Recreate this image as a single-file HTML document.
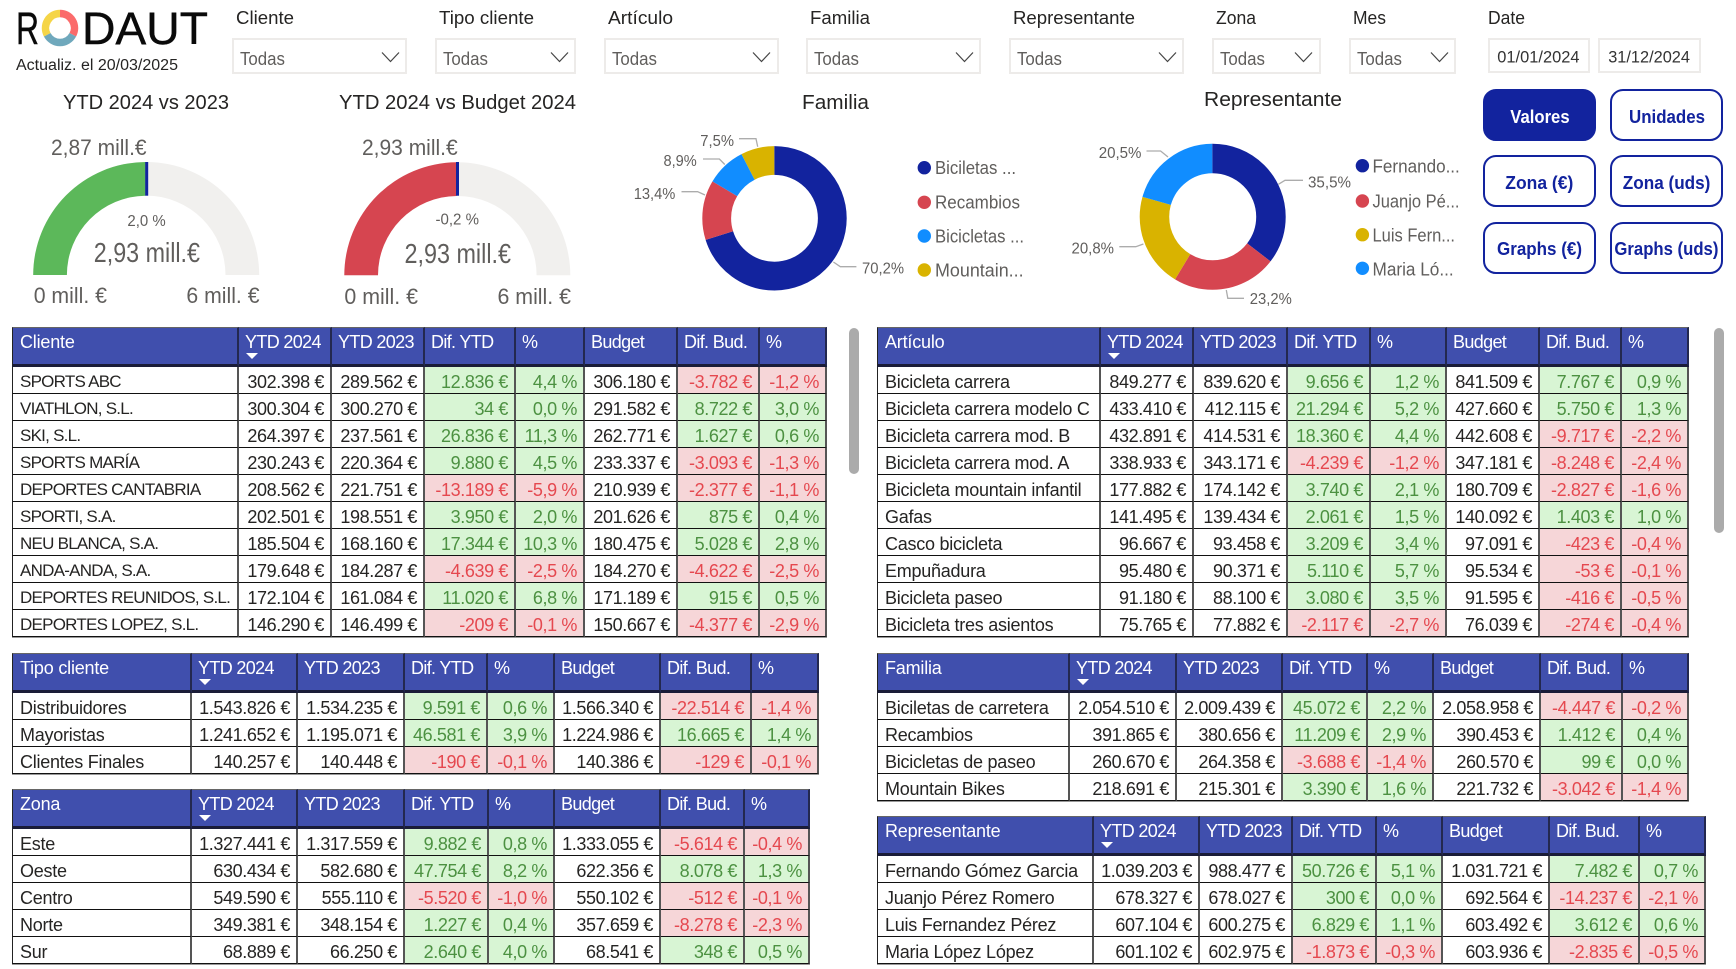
<!DOCTYPE html>
<html lang="es"><head><meta charset="utf-8"><title>RODAUT</title>
<style>
html,body{margin:0;padding:0;background:#fff}
#p{position:relative;width:1736px;height:969px;overflow:hidden;background:#fff;font-family:"Liberation Sans",sans-serif}
svg{position:absolute;left:0;top:0}
svg text{font-family:"Liberation Sans",sans-serif}
.d{position:absolute;box-sizing:border-box;border:2px solid #EDEBE9;background:#fff}
.b{position:absolute;box-sizing:border-box;border:2px solid #12239E;border-radius:13px;background:#fff}
.b.a{background:#12239E}
.s{position:absolute;background:#ABABAB;border-radius:5px;width:10px}
table{position:absolute;table-layout:fixed;border-collapse:separate;border-spacing:0;font-size:18px;color:#252423;border-bottom:1px solid #999}
th{height:40px;box-sizing:border-box;background:#404FAD;color:#fff;font-weight:400;text-align:left;vertical-align:top;padding:3px 0 0 6px;line-height:22px;letter-spacing:-.65px;border-top:1px solid #666;border-right:2px solid #23284F;border-bottom:3px solid #1A1C38;position:relative;white-space:nowrap;overflow:hidden}
th:first-child{padding-left:7px;border-left:1px solid #222;letter-spacing:-.2px}
th i{position:absolute;left:7px;top:25px;width:0;height:0;border-left:6.5px solid transparent;border-right:6.5px solid transparent;border-top:6.5px solid #fff}
td{height:27px;box-sizing:border-box;text-align:right;padding:4px 6px 0 0;line-height:22px;letter-spacing:-.38px;border-right:2px solid #555;border-bottom:1px solid #111;white-space:nowrap;overflow:hidden;background:#fff}
td:first-child{text-align:left;padding-left:7px;border-left:1px solid #222;letter-spacing:-.25px;color:#252423}
.caps td:first-child{font-size:17px;letter-spacing:-.75px}
td.g{background:#D8F5D4;color:#4C9141}
td.r{background:#F6D6D8;color:#E5484F}
</style></head><body><div id="p">

<svg width="1736" height="330" viewBox="0 0 1736 330">
<title>RODAUT</title>
<!-- logo -->
<text x="16" y="44" font-size="45" fill="#0a0a0a" stroke="#0a0a0a" stroke-width=".4" textLength="23" lengthAdjust="spacingAndGlyphs">R</text>
<path d="M60 13.5 A14.5 14.5 0 0 1 72.8 34.8" fill="none" stroke="#FB6B6B" stroke-width="7.5"/>
<path d="M72.8 34.8 A14.5 14.5 0 0 1 47.2 34.8" fill="none" stroke="#6FA8BC" stroke-width="7.5"/>
<path d="M47.2 34.8 A14.5 14.5 0 0 1 60 13.5" fill="none" stroke="#F5D547" stroke-width="7.5"/>
<text x="82" y="44" font-size="45" fill="#0a0a0a" stroke="#0a0a0a" stroke-width=".4" textLength="126" lengthAdjust="spacingAndGlyphs">DAUT</text>
<text x="16" y="70" font-size="15.5" fill="#252423" textLength="162" lengthAdjust="spacingAndGlyphs">Actualiz. el 20/03/2025</text>

<!-- slicer labels -->
<g font-size="18.5" fill="#252423">
<text x="236" y="24" textLength="58" lengthAdjust="spacingAndGlyphs">Cliente</text>
<text x="439" y="24" textLength="95" lengthAdjust="spacingAndGlyphs">Tipo cliente</text>
<text x="608" y="24" textLength="65" lengthAdjust="spacingAndGlyphs">Artículo</text>
<text x="810" y="24" textLength="60" lengthAdjust="spacingAndGlyphs">Familia</text>
<text x="1013" y="24" textLength="122" lengthAdjust="spacingAndGlyphs">Representante</text>
<text x="1216" y="24" textLength="40" lengthAdjust="spacingAndGlyphs">Zona</text>
<text x="1353" y="24" textLength="33" lengthAdjust="spacingAndGlyphs">Mes</text>
<text x="1488" y="24" textLength="37" lengthAdjust="spacingAndGlyphs">Date</text>
</g>

<!-- titles -->
<g font-size="20" fill="#252423">
<text x="63" y="109" textLength="166" lengthAdjust="spacingAndGlyphs">YTD 2024 vs 2023</text>
<text x="339" y="109" textLength="237" lengthAdjust="spacingAndGlyphs">YTD 2024 vs Budget 2024</text>
<text x="802" y="109" textLength="67" lengthAdjust="spacingAndGlyphs">Familia</text>
<text x="1204" y="106" textLength="138" lengthAdjust="spacingAndGlyphs">Representante</text>
</g>

<!-- gauge 1 -->
<path d="M33.2 275 A113 113 0 1 1 259.2 275 L225.5 275 A79.3 79.3 0 1 0 66.9 275 Z" fill="#F1F0EE"/>
<path d="M33.2 275 A113 113 0 0 1 145.4 162 L145.4 195.7 A79.3 79.3 0 0 0 66.9 275 Z" fill="#5CB85A"/>
<rect x="145.2" y="162" width="3" height="33.7" fill="#12239E"/>
<!-- gauge 2 -->
<path d="M344.3 275.3 A113 113 0 1 1 570.3 275.3 L536.6 275.3 A79.3 79.3 0 1 0 378 275.3 Z" fill="#F1F0EE"/>
<path d="M344.3 275.3 A113 113 0 0 1 456.5 162.3 L456.5 196 A79.3 79.3 0 0 0 378 275.3 Z" fill="#D64550"/>
<rect x="456" y="162" width="3" height="33.7" fill="#12239E"/>

<g fill="#605E5C">
<text x="51" y="155" font-size="22" textLength="95.6" lengthAdjust="spacingAndGlyphs">2,87 mill.€</text>
<text x="127.4" y="226" font-size="16" textLength="38.3" lengthAdjust="spacingAndGlyphs">2,0 %</text>
<text x="93.8" y="262" font-size="28" textLength="106.2" lengthAdjust="spacingAndGlyphs">2,93 mill.€</text>
<text x="33.7" y="303" font-size="22" textLength="73.3" lengthAdjust="spacingAndGlyphs">0 mill. €</text>
<text x="186.4" y="303" font-size="22" textLength="73.1" lengthAdjust="spacingAndGlyphs">6 mill. €</text>
<text x="362" y="155" font-size="22" textLength="95.7" lengthAdjust="spacingAndGlyphs">2,93 mill.€</text>
<text x="435.5" y="224.5" font-size="16" textLength="43.5" lengthAdjust="spacingAndGlyphs">-0,2 %</text>
<text x="404.5" y="263" font-size="28" textLength="106.5" lengthAdjust="spacingAndGlyphs">2,93 mill.€</text>
<text x="344.4" y="304" font-size="22" textLength="73.6" lengthAdjust="spacingAndGlyphs">0 mill. €</text>
<text x="497.5" y="304" font-size="22" textLength="73.5" lengthAdjust="spacingAndGlyphs">6 mill. €</text>
</g>

<!-- donut 1 -->
<g fill="none" stroke-width="28.8" transform="rotate(-90 774.5 218.3)">
<circle cx="774.5" cy="218.3" r="57.8" pathLength="100" stroke="#12239E" stroke-dasharray="70.2 29.8"/>
<circle cx="774.5" cy="218.3" r="57.8" pathLength="100" stroke="#D64550" stroke-dasharray="13.4 86.6" stroke-dashoffset="-70.2"/>
<circle cx="774.5" cy="218.3" r="57.8" pathLength="100" stroke="#118DFF" stroke-dasharray="8.9 91.1" stroke-dashoffset="-83.6"/>
<circle cx="774.5" cy="218.3" r="57.8" pathLength="100" stroke="#D9B300" stroke-dasharray="7.5 92.5" stroke-dashoffset="-92.5"/>
</g>
<!-- donut 2 -->
<g fill="none" stroke-width="29.5" transform="rotate(-90 1212.7 216.8)">
<circle cx="1212.7" cy="216.8" r="58.25" pathLength="100" stroke="#12239E" stroke-dasharray="35.5 64.5"/>
<circle cx="1212.7" cy="216.8" r="58.25" pathLength="100" stroke="#D64550" stroke-dasharray="23.2 76.8" stroke-dashoffset="-35.5"/>
<circle cx="1212.7" cy="216.8" r="58.25" pathLength="100" stroke="#D9B300" stroke-dasharray="20.8 79.2" stroke-dashoffset="-58.7"/>
<circle cx="1212.7" cy="216.8" r="58.25" pathLength="100" stroke="#118DFF" stroke-dasharray="20.5 79.5" stroke-dashoffset="-79.5"/>
</g>

<!-- leaders -->
<g fill="none" stroke="#ACACAC" stroke-width="1.3">
<path d="M739 138.7H756L757.7 146.7"/>
<path d="M703 159H719.4L724.8 164.5"/>
<path d="M681.5 191.7H697.6L705 195"/>
<path d="M856.4 266.7H840.3L833.4 262"/>
<path d="M1146.5 151H1160.6L1168 157"/>
<path d="M1119.3 246.7H1135.8L1143.4 244"/>
<path d="M1303 180.3H1285L1278.4 184.3"/>
<path d="M1244 298.3H1227.8L1226.3 290"/>
</g>
<g font-size="16" fill="#605E5C">
<text x="700.3" y="146" textLength="33.7" lengthAdjust="spacingAndGlyphs">7,5%</text>
<text x="663.5" y="166" textLength="33.3" lengthAdjust="spacingAndGlyphs">8,9%</text>
<text x="633.7" y="199" textLength="41.7" lengthAdjust="spacingAndGlyphs">13,4%</text>
<text x="862" y="273.3" textLength="42" lengthAdjust="spacingAndGlyphs">70,2%</text>
<text x="1098.7" y="158" textLength="42.8" lengthAdjust="spacingAndGlyphs">20,5%</text>
<text x="1071.5" y="253.3" textLength="42.5" lengthAdjust="spacingAndGlyphs">20,8%</text>
<text x="1308" y="187.3" textLength="43" lengthAdjust="spacingAndGlyphs">35,5%</text>
<text x="1249.7" y="304" textLength="42.1" lengthAdjust="spacingAndGlyphs">23,2%</text>
</g>

<!-- legends -->
<circle cx="924.3" cy="167.7" r="6.7" fill="#12239E"/>
<circle cx="924.3" cy="202.3" r="6.7" fill="#D64550"/>
<circle cx="924.3" cy="236" r="6.7" fill="#118DFF"/>
<circle cx="924.3" cy="270" r="6.7" fill="#D9B300"/>
<circle cx="1362.4" cy="165.7" r="6.7" fill="#12239E"/>
<circle cx="1362.4" cy="201" r="6.7" fill="#D64550"/>
<circle cx="1362.4" cy="234.7" r="6.7" fill="#D9B300"/>
<circle cx="1362.4" cy="268.3" r="6.7" fill="#118DFF"/>
<g font-size="18" fill="#605E5C">
<text x="935" y="174" textLength="81" lengthAdjust="spacingAndGlyphs">Biciletas ...</text>
<text x="935" y="208.7" textLength="85" lengthAdjust="spacingAndGlyphs">Recambios</text>
<text x="935" y="242.7" textLength="89" lengthAdjust="spacingAndGlyphs">Bicicletas ...</text>
<text x="935" y="276.7" textLength="88.6" lengthAdjust="spacingAndGlyphs">Mountain...</text>
<text x="1372.5" y="172.3" textLength="87.3" lengthAdjust="spacingAndGlyphs">Fernando...</text>
<text x="1372.5" y="207.7" textLength="87" lengthAdjust="spacingAndGlyphs">Juanjo Pé...</text>
<text x="1372.5" y="241.3" textLength="82.5" lengthAdjust="spacingAndGlyphs">Luis Fern...</text>
<text x="1372.5" y="275.3" textLength="81.2" lengthAdjust="spacingAndGlyphs">Maria Ló...</text>
</g>
</svg>

<!-- dropdowns -->
<div class="d" style="left:232px;top:38px;width:175px;height:36px"></div>
<div class="d" style="left:435px;top:38px;width:141px;height:36px"></div>
<div class="d" style="left:604px;top:38px;width:175px;height:36px"></div>
<div class="d" style="left:806px;top:38px;width:175px;height:36px"></div>
<div class="d" style="left:1009px;top:38px;width:175px;height:36px"></div>
<div class="d" style="left:1212px;top:38px;width:109px;height:36px"></div>
<div class="d" style="left:1349px;top:38px;width:107px;height:36px"></div>
<div class="d" style="left:1488px;top:38px;width:102px;height:35px"></div>
<div class="d" style="left:1598px;top:38px;width:103px;height:35px"></div>

<svg width="1736" height="100" viewBox="0 0 1736 100">
<g font-size="18" fill="#605E5C">
<text x="240" y="65" textLength="45" lengthAdjust="spacingAndGlyphs">Todas</text>
<text x="443" y="65" textLength="45" lengthAdjust="spacingAndGlyphs">Todas</text>
<text x="612" y="65" textLength="45" lengthAdjust="spacingAndGlyphs">Todas</text>
<text x="814" y="65" textLength="45" lengthAdjust="spacingAndGlyphs">Todas</text>
<text x="1017" y="65" textLength="45" lengthAdjust="spacingAndGlyphs">Todas</text>
<text x="1220" y="65" textLength="45" lengthAdjust="spacingAndGlyphs">Todas</text>
<text x="1357" y="65" textLength="45" lengthAdjust="spacingAndGlyphs">Todas</text>
</g>
<g fill="none" stroke="#444" stroke-width="1.2">
<path d="M382 52.5L390.5 61.5L399 52.5"/>
<path d="M551 52.5L559.5 61.5L568 52.5"/>
<path d="M753 52.5L761.5 61.5L770 52.5"/>
<path d="M956 52.5L964.5 61.5L973 52.5"/>
<path d="M1159 52.5L1167.5 61.5L1176 52.5"/>
<path d="M1295 52.5L1303.5 61.5L1312 52.5"/>
<path d="M1431 52.5L1439.5 61.5L1448 52.5"/>
</g>
<g font-size="16.5" fill="#333">
<text x="1497.3" y="62.3" textLength="82.2" lengthAdjust="spacingAndGlyphs">01/01/2024</text>
<text x="1608.2" y="62.3" textLength="81.8" lengthAdjust="spacingAndGlyphs">31/12/2024</text>
</g>
</svg>

<!-- buttons -->
<div class="b a" style="left:1483px;top:89px;width:113px;height:52px"></div>
<div class="b" style="left:1610px;top:89px;width:113px;height:52px"></div>
<div class="b" style="left:1483px;top:155px;width:113px;height:52px"></div>
<div class="b" style="left:1610px;top:155px;width:113px;height:52px"></div>
<div class="b" style="left:1483px;top:222px;width:113px;height:52px"></div>
<div class="b" style="left:1610px;top:222px;width:113px;height:52px"></div>
<svg width="1736" height="300" viewBox="0 0 1736 300">
<g font-size="18.5" font-weight="700" fill="#12239E">
<text x="1510.3" y="122.8" fill="#fff" textLength="59.3" lengthAdjust="spacingAndGlyphs">Valores</text>
<text x="1629" y="122.8" textLength="76" lengthAdjust="spacingAndGlyphs">Unidades</text>
<text x="1505.3" y="188.8" textLength="68" lengthAdjust="spacingAndGlyphs">Zona (€)</text>
<text x="1622.8" y="188.8" textLength="87.6" lengthAdjust="spacingAndGlyphs">Zona (uds)</text>
<text x="1497" y="254.8" textLength="85" lengthAdjust="spacingAndGlyphs">Graphs (€)</text>
<text x="1614.4" y="254.8" textLength="104" lengthAdjust="spacingAndGlyphs">Graphs (uds)</text>
</g>
</svg>

<!-- scrollbars -->
<div class="s" style="left:849px;top:328px;height:146px"></div>
<div class="s" style="left:1714px;top:328px;height:205px"></div>

<!-- Cliente -->
<table class="caps" style="left:12px;top:327px;width:815px">
<colgroup><col style="width:227px"><col style="width:93px"><col style="width:93px"><col style="width:91px"><col style="width:69px"><col style="width:93px"><col style="width:82px"><col style="width:67px"></colgroup>
<thead><tr><th>Cliente</th><th>YTD 2024<i></i></th><th>YTD 2023</th><th>Dif. YTD</th><th>%</th><th>Budget</th><th>Dif. Bud.</th><th>%</th></tr></thead>
<tbody>
<tr><td>SPORTS ABC</td><td>302.398 €</td><td>289.562 €</td><td class="g">12.836 €</td><td class="g">4,4 %</td><td>306.180 €</td><td class="r">-3.782 €</td><td class="r">-1,2 %</td></tr>
<tr><td>VIATHLON, S.L.</td><td>300.304 €</td><td>300.270 €</td><td class="g">34 €</td><td class="g">0,0 %</td><td>291.582 €</td><td class="g">8.722 €</td><td class="g">3,0 %</td></tr>
<tr><td>SKI, S.L.</td><td>264.397 €</td><td>237.561 €</td><td class="g">26.836 €</td><td class="g">11,3 %</td><td>262.771 €</td><td class="g">1.627 €</td><td class="g">0,6 %</td></tr>
<tr><td>SPORTS MARÍA</td><td>230.243 €</td><td>220.364 €</td><td class="g">9.880 €</td><td class="g">4,5 %</td><td>233.337 €</td><td class="r">-3.093 €</td><td class="r">-1,3 %</td></tr>
<tr><td>DEPORTES CANTABRIA</td><td>208.562 €</td><td>221.751 €</td><td class="r">-13.189 €</td><td class="r">-5,9 %</td><td>210.939 €</td><td class="r">-2.377 €</td><td class="r">-1,1 %</td></tr>
<tr><td>SPORTI, S.A.</td><td>202.501 €</td><td>198.551 €</td><td class="g">3.950 €</td><td class="g">2,0 %</td><td>201.626 €</td><td class="g">875 €</td><td class="g">0,4 %</td></tr>
<tr><td>NEU BLANCA, S.A.</td><td>185.504 €</td><td>168.160 €</td><td class="g">17.344 €</td><td class="g">10,3 %</td><td>180.475 €</td><td class="g">5.028 €</td><td class="g">2,8 %</td></tr>
<tr><td>ANDA-ANDA, S.A.</td><td>179.648 €</td><td>184.287 €</td><td class="r">-4.639 €</td><td class="r">-2,5 %</td><td>184.270 €</td><td class="r">-4.622 €</td><td class="r">-2,5 %</td></tr>
<tr><td>DEPORTES REUNIDOS, S.L.</td><td>172.104 €</td><td>161.084 €</td><td class="g">11.020 €</td><td class="g">6,8 %</td><td>171.189 €</td><td class="g">915 €</td><td class="g">0,5 %</td></tr>
<tr><td>DEPORTES LOPEZ, S.L.</td><td>146.290 €</td><td>146.499 €</td><td class="r">-209 €</td><td class="r">-0,1 %</td><td>150.667 €</td><td class="r">-4.377 €</td><td class="r">-2,9 %</td></tr>
</tbody></table>

<!-- Artículo -->
<table style="left:877px;top:327px;width:812px">
<colgroup><col style="width:224px"><col style="width:93px"><col style="width:94px"><col style="width:83px"><col style="width:76px"><col style="width:93px"><col style="width:82px"><col style="width:67px"></colgroup>
<thead><tr><th>Artículo</th><th>YTD 2024<i></i></th><th>YTD 2023</th><th>Dif. YTD</th><th>%</th><th>Budget</th><th>Dif. Bud.</th><th>%</th></tr></thead>
<tbody>
<tr><td>Bicicleta carrera</td><td>849.277 €</td><td>839.620 €</td><td class="g">9.656 €</td><td class="g">1,2 %</td><td>841.509 €</td><td class="g">7.767 €</td><td class="g">0,9 %</td></tr>
<tr><td>Bicicleta carrera modelo C</td><td>433.410 €</td><td>412.115 €</td><td class="g">21.294 €</td><td class="g">5,2 %</td><td>427.660 €</td><td class="g">5.750 €</td><td class="g">1,3 %</td></tr>
<tr><td>Bicicleta carrera mod. B</td><td>432.891 €</td><td>414.531 €</td><td class="g">18.360 €</td><td class="g">4,4 %</td><td>442.608 €</td><td class="r">-9.717 €</td><td class="r">-2,2 %</td></tr>
<tr><td>Bicicleta carrera mod. A</td><td>338.933 €</td><td>343.171 €</td><td class="r">-4.239 €</td><td class="r">-1,2 %</td><td>347.181 €</td><td class="r">-8.248 €</td><td class="r">-2,4 %</td></tr>
<tr><td>Bicicleta mountain infantil</td><td>177.882 €</td><td>174.142 €</td><td class="g">3.740 €</td><td class="g">2,1 %</td><td>180.709 €</td><td class="r">-2.827 €</td><td class="r">-1,6 %</td></tr>
<tr><td>Gafas</td><td>141.495 €</td><td>139.434 €</td><td class="g">2.061 €</td><td class="g">1,5 %</td><td>140.092 €</td><td class="g">1.403 €</td><td class="g">1,0 %</td></tr>
<tr><td>Casco bicicleta</td><td>96.667 €</td><td>93.458 €</td><td class="g">3.209 €</td><td class="g">3,4 %</td><td>97.091 €</td><td class="r">-423 €</td><td class="r">-0,4 %</td></tr>
<tr><td>Empuñadura</td><td>95.480 €</td><td>90.371 €</td><td class="g">5.110 €</td><td class="g">5,7 %</td><td>95.534 €</td><td class="r">-53 €</td><td class="r">-0,1 %</td></tr>
<tr><td>Bicicleta paseo</td><td>91.180 €</td><td>88.100 €</td><td class="g">3.080 €</td><td class="g">3,5 %</td><td>91.595 €</td><td class="r">-416 €</td><td class="r">-0,5 %</td></tr>
<tr><td>Bicicleta tres asientos</td><td>75.765 €</td><td>77.882 €</td><td class="r">-2.117 €</td><td class="r">-2,7 %</td><td>76.039 €</td><td class="r">-274 €</td><td class="r">-0,4 %</td></tr>
</tbody></table>

<!-- Tipo cliente -->
<table style="left:12px;top:653px;width:807px">
<colgroup><col style="width:180px"><col style="width:106px"><col style="width:107px"><col style="width:83px"><col style="width:67px"><col style="width:106px"><col style="width:91px"><col style="width:67px"></colgroup>
<thead><tr><th>Tipo cliente</th><th>YTD 2024<i></i></th><th>YTD 2023</th><th>Dif. YTD</th><th>%</th><th>Budget</th><th>Dif. Bud.</th><th>%</th></tr></thead>
<tbody>
<tr><td>Distribuidores</td><td>1.543.826 €</td><td>1.534.235 €</td><td class="g">9.591 €</td><td class="g">0,6 %</td><td>1.566.340 €</td><td class="r">-22.514 €</td><td class="r">-1,4 %</td></tr>
<tr><td>Mayoristas</td><td>1.241.652 €</td><td>1.195.071 €</td><td class="g">46.581 €</td><td class="g">3,9 %</td><td>1.224.986 €</td><td class="g">16.665 €</td><td class="g">1,4 %</td></tr>
<tr><td>Clientes Finales</td><td>140.257 €</td><td>140.448 €</td><td class="r">-190 €</td><td class="r">-0,1 %</td><td>140.386 €</td><td class="r">-129 €</td><td class="r">-0,1 %</td></tr>
</tbody></table>

<!-- Zona -->
<table style="left:12px;top:789px;width:798px">
<colgroup><col style="width:180px"><col style="width:106px"><col style="width:107px"><col style="width:84px"><col style="width:66px"><col style="width:106px"><col style="width:84px"><col style="width:65px"></colgroup>
<thead><tr><th>Zona</th><th>YTD 2024<i></i></th><th>YTD 2023</th><th>Dif. YTD</th><th>%</th><th>Budget</th><th>Dif. Bud.</th><th>%</th></tr></thead>
<tbody>
<tr><td>Este</td><td>1.327.441 €</td><td>1.317.559 €</td><td class="g">9.882 €</td><td class="g">0,8 %</td><td>1.333.055 €</td><td class="r">-5.614 €</td><td class="r">-0,4 %</td></tr>
<tr><td>Oeste</td><td>630.434 €</td><td>582.680 €</td><td class="g">47.754 €</td><td class="g">8,2 %</td><td>622.356 €</td><td class="g">8.078 €</td><td class="g">1,3 %</td></tr>
<tr><td>Centro</td><td>549.590 €</td><td>555.110 €</td><td class="r">-5.520 €</td><td class="r">-1,0 %</td><td>550.102 €</td><td class="r">-512 €</td><td class="r">-0,1 %</td></tr>
<tr><td>Norte</td><td>349.381 €</td><td>348.154 €</td><td class="g">1.227 €</td><td class="g">0,4 %</td><td>357.659 €</td><td class="r">-8.278 €</td><td class="r">-2,3 %</td></tr>
<tr><td>Sur</td><td>68.889 €</td><td>66.250 €</td><td class="g">2.640 €</td><td class="g">4,0 %</td><td>68.541 €</td><td class="g">348 €</td><td class="g">0,5 %</td></tr>
</tbody></table>

<!-- Familia -->
<table style="left:877px;top:653px;width:812px">
<colgroup><col style="width:193px"><col style="width:107px"><col style="width:106px"><col style="width:85px"><col style="width:66px"><col style="width:107px"><col style="width:82px"><col style="width:66px"></colgroup>
<thead><tr><th>Familia</th><th>YTD 2024<i></i></th><th>YTD 2023</th><th>Dif. YTD</th><th>%</th><th>Budget</th><th>Dif. Bud.</th><th>%</th></tr></thead>
<tbody>
<tr><td>Biciletas de carretera</td><td>2.054.510 €</td><td>2.009.439 €</td><td class="g">45.072 €</td><td class="g">2,2 %</td><td>2.058.958 €</td><td class="r">-4.447 €</td><td class="r">-0,2 %</td></tr>
<tr><td>Recambios</td><td>391.865 €</td><td>380.656 €</td><td class="g">11.209 €</td><td class="g">2,9 %</td><td>390.453 €</td><td class="g">1.412 €</td><td class="g">0,4 %</td></tr>
<tr><td>Bicicletas de paseo</td><td>260.670 €</td><td>264.358 €</td><td class="r">-3.688 €</td><td class="r">-1,4 %</td><td>260.570 €</td><td class="g">99 €</td><td class="g">0,0 %</td></tr>
<tr><td>Mountain Bikes</td><td>218.691 €</td><td>215.301 €</td><td class="g">3.390 €</td><td class="g">1,6 %</td><td>221.732 €</td><td class="r">-3.042 €</td><td class="r">-1,4 %</td></tr>
</tbody></table>

<!-- Representante -->
<table style="left:877px;top:816px;width:829px">
<colgroup><col style="width:217px"><col style="width:106px"><col style="width:93px"><col style="width:84px"><col style="width:66px"><col style="width:107px"><col style="width:90px"><col style="width:66px"></colgroup>
<thead><tr><th>Representante</th><th>YTD 2024<i></i></th><th>YTD 2023</th><th>Dif. YTD</th><th>%</th><th>Budget</th><th>Dif. Bud.</th><th>%</th></tr></thead>
<tbody>
<tr><td>Fernando Gómez Garcia</td><td>1.039.203 €</td><td>988.477 €</td><td class="g">50.726 €</td><td class="g">5,1 %</td><td>1.031.721 €</td><td class="g">7.482 €</td><td class="g">0,7 %</td></tr>
<tr><td>Juanjo Pérez Romero</td><td>678.327 €</td><td>678.027 €</td><td class="g">300 €</td><td class="g">0,0 %</td><td>692.564 €</td><td class="r">-14.237 €</td><td class="r">-2,1 %</td></tr>
<tr><td>Luis Fernandez Pérez</td><td>607.104 €</td><td>600.275 €</td><td class="g">6.829 €</td><td class="g">1,1 %</td><td>603.492 €</td><td class="g">3.612 €</td><td class="g">0,6 %</td></tr>
<tr><td>Maria López López</td><td>601.102 €</td><td>602.975 €</td><td class="r">-1.873 €</td><td class="r">-0,3 %</td><td>603.936 €</td><td class="r">-2.835 €</td><td class="r">-0,5 %</td></tr>
</tbody></table>

</div></body></html>
